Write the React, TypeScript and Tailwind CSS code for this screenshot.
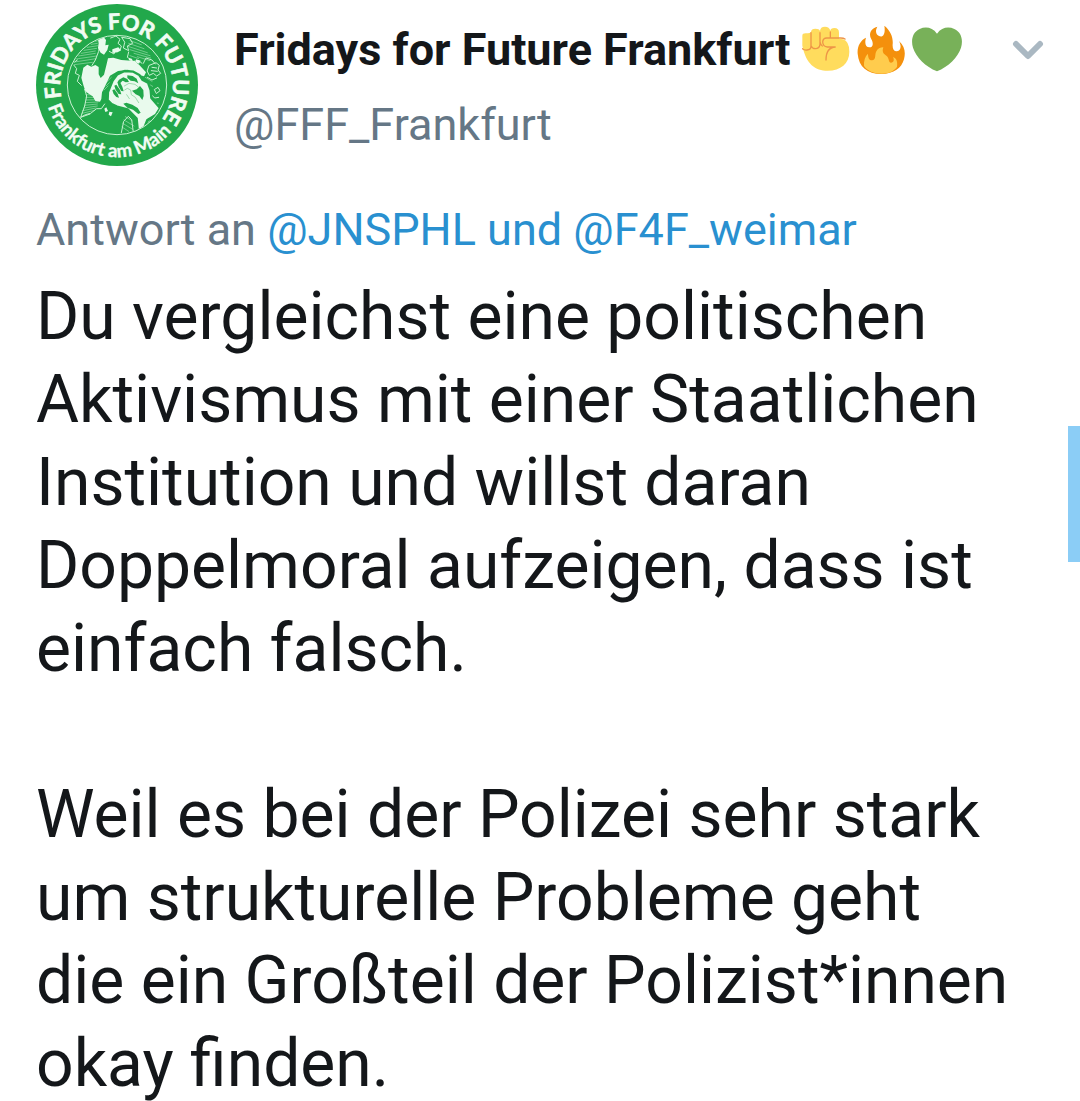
import { ChevronDown } from 'lucide-react';

function Avatar() {
  return (
    <svg
      className="block w-[162px] h-[162px] shrink-0"
      viewBox="18 12 486 486"
      role="img"
      aria-label="Fridays for Future Frankfurt am Main"
    >
      <defs>
        <path id="ring-top" d="M 95 294 A 169 169 0 1 1 385 370" />
        <path id="ring-bottom" d="M 54 320 A 215 215 0 0 0 465 320" />
        <clipPath id="globe">
          <circle cx="261" cy="255" r="147" />
        </clipPath>
      </defs>
      <circle cx="261" cy="255" r="243" fill="#22a84b" />
      <g fill="#f1fcf3" stroke="#f1fcf3" fontFamily="Lato, sans-serif" fontWeight="700">
        <text fontSize="65" strokeWidth="2">
          <textPath href="#ring-top">FRIDAYS FOR FUTURE</textPath>
        </text>
        <text fontSize="56" strokeWidth="1">
          <textPath href="#ring-bottom">Frankfurt am Main</textPath>
        </text>
      </g>

      <g clipPath="url(#globe)" strokeLinecap="round" strokeLinejoin="round">
        {/* hatched oceans */}
        <g stroke="#9bdcad" strokeWidth="2" fill="none">
          <path d="M146 168l50-8M138 177l62-9M134 186l64-10M132 194l55-7M154 160l42-7M162 151l38-6M172 142l32-5M184 133l18-3M196 124l8-2" />
          <path d="M300 122l34 12M296 130l46 16M294 139l58 19M300 149l60 18M312 160l50 14M322 170l38 12M300 167l26 9" />
          <path d="M168 276l34 4M168 284l40 2M168 292l42 0M168 300l40-1M166 308l38-2M164 316l38-4M162 324l40-6M158 332l40-8M156 340l38-9" />
          <path d="M286 350l20 12M282 360l30 18M278 370l30 18M276 381l20 13M344 362l34-20M350 352l30-16M354 368l16-9M340 372l20-10" />
          <path d="M226 224l14-10M228 234l18-14M230 246l14-14M228 258l10-10M222 270l12-12M346 232l20 12M352 250l16 9" />
        </g>
        {/* coast lines */}
        <g stroke="#c8f1d1" strokeWidth="3" fill="none">
          <path d="M164 268l6 20-6 30-12 34 14-8 16-4 18-14 14 0 10-14 M152 352l28-10" />
          <path d="M132 196l8 10-4 14 12 6-6 18 12 12M134 186l8-6 M186 196l10-16 10-26 4-24 14-20" />
          <path d="M242 114l16-6 12 10-6 12 10 8-4 14-14-2-4 12-14-8M276 112l24 4 8 14-16 8 4 14-16-8 4-16z" />
          <path d="M296 156l-4 16 18 12 16-2 10 8M340 190l8-16 18 6 10 12" />
          <path d="M358 196l20-8 10 8-4 14 8 10-12 8-10-8-12 6-6-12zM366 202l14 2M364 212l18 2M352 232l14 8 14-6" />
          <path d="M374 268l10-6 6 10-10 8zM366 286l8 8 12-2M364 302l8 8 12 0" />
        </g>
        {/* land masses */}
        <g fill="#e9faed">
          <path d="M204 118l16-8 8 10-2 16 10-2-4 16-10 14-10-6-8-14 2-14z" />
          <path d="M247 148l18-6 8 9-10 6-16 2zM318 178l14 4-5 9-10-4zM298 174l9 3-2 7-9-4z" />
          <path d="M160 203l12-9 12 6 12-5 10 6 0 22 6 11 10-10 8-32 4-17 16-2 24 7 40 3 14 12 20 22-6 12-28-8-20-12-30 4-24 14-16 34-8 16-2 20-4 8-14-2-8-14-12-8-10-8-6-18-6-22z" />
          <path d="M223 326l6-4 5 11-8 3zM238 335l10 2-5 12-7-5z" />
        </g>
        {/* raised fist and forearm */}
        <path
          d="M234 276l14-34 14-19 22-10 26 2 18 10 10 15 16 8 8 22 2 24 26 30-12 20-26 16-16 40-12-2-4-42-27-28-32-8-16-8-12-12z"
          fill="#e9faed"
          stroke="#22a84b"
          strokeWidth="7"
        />
        <g fill="#22a84b">
          <path d="M266 240l14-8 12 5 5 9-10 1-9-5-7 7-7-3zM292 226l16 2 12 8 5 14-11-6-12-2-10-8z" />
          <path d="M262 246l6-4 9 18 4 14-7-1-8-13zM253 257l6-3 11 16 4 13-8-1-9-12zM247 271l6-3 10 13 4 12-8-2-8-9z" />
          <path d="M306 272l14-4 10-10 10 12 1 18-4 12-9-12-11-5zM280 311l9-3 18 6 16 10 9 14-7 4-16-13-17-6z" />
        </g>
        <path
          d="M283 258l14-8 18 3 10 8M284 270l8-5 10 5 2 14 12 8 10 16M290 284l8 12"
          fill="none"
          stroke="#7acb90"
          strokeWidth="2"
        />
        <path d="M274 398l7-34 14-15 10 10 5 38" fill="none" stroke="#c8f1d1" strokeWidth="3" />
      </g>
      <circle cx="261" cy="255" r="149" fill="none" stroke="#c8f1d1" strokeWidth="3" />
    </svg>
  );
}

function Fist() {
  return (
    <svg className="block w-12 h-12 shrink-0" viewBox="34 34 144 144" role="img" aria-label="Faust">
      <path
        d="M35 103V63q0-7 10-7 15 0 16-5 1-9 13-9 12 0 14 7 1-13 15-13 13 0 16 12 1-8 12-8 14 0 14 14v18l12 2q19 6 19 37c0 35-26 57-65 57-37 0-65-20-76-75z"
        fill="#ffdc5d"
      />
      <path
        d="M35 102q6 5 14 4 12 0 12-12V54M61 93q4 9 13 9 12 0 14-13V54M88 82q2 10 7 12M119 52v17M163 73q-4-3-13-3h-42q-11 0-12 12 1 14 14 15h25q-29 1-29 39"
        fill="none"
        stroke="#ee9547"
        strokeWidth="4"
        strokeLinecap="round"
      />
    </svg>
  );
}

function Fire() {
  return (
    <svg className="block w-12 h-12 shrink-0" viewBox="201 34 144 144" role="img" aria-label="Feuer">
      <path
        d="M283 33c19 16 27 36 25 56-1 14 4 22 13 21 12-2 14-16 6-31 18 16 20 36 15 55-7 26-30 44-68 44-42 0-68-22-71-61-2-21 8-40 25-48-5 16-1 29 10 29 13 0 12-14 6-24-10-17 0-34 18-38-8 15-3 26 7 29 14 3 17-14 14-32z"
        fill="#f4900c"
      />
      <path
        d="M222 154c-1-15 3-29 12-37 0 13 4 20 12 20 13-1 8-16 12-25 4-10 13-14 22-14-6 17 4 21 11 27 7 7 4 19 12 19 9 0 10-10 6-17 12 4 14 17 12 30-10 13-23 20-46 20-24 0-43-8-53-23z"
        fill="#ffcc4d"
      />
    </svg>
  );
}

function Heart() {
  return (
    <svg className="block w-[50px] h-12 shrink-0" viewBox="366 34 150 144" role="img" aria-label="Grünes Herz">
      <path
        d="M441 57c14-19 34-22 52-14 21 9 27 33 20 56-9 29-38 57-72 71-34-14-63-42-72-71-7-23-1-47 20-56 18-8 38-5 52 14z"
        fill="#78b159"
      />
    </svg>
  );
}

export default function App() {
  return (
    <main className="relative min-h-screen overflow-hidden bg-white pt-1 pl-9 font-[Roboto,sans-serif] text-[#14171a]">
      <article>
        <header className="flex gap-9 pr-7">
          <Avatar />
          <div className="min-w-0 flex-1 pt-2 text-[45px] leading-[75px]">
            <div className="flex items-center">
              <h1 className="whitespace-nowrap font-bold">Fridays for Future Frankfurt</h1>
              <div className="ml-3 flex gap-[7px]">
                <Fist />
                <Fire />
                <Heart />
              </div>
              <button type="button" aria-label="Mehr" className="ml-auto text-[#aab8c2]">
                <ChevronDown className="block w-12 h-12" strokeWidth={3} />
              </button>
            </div>
            <p className="text-[#657786]">@FFF_Frankfurt</p>
          </div>
        </header>

        <p className="mt-[34px] text-[45px] leading-[60px] text-[#657786]">
          Antwort an{' '}
          <span className="text-[#2990d0]">
            <a href="#jnsphl">@JNSPHL</a> und <a href="#f4f-weimar">@F4F_weimar</a>
          </span>
        </p>

        <div className="mt-[15px] pr-[66px] text-[66px] leading-[83px]">
          <p className="mb-[83px]">
            Du vergleichst eine politischen Aktivismus mit einer Staatlichen Institution und willst daran
            Doppelmoral aufzeigen, dass ist einfach falsch.
          </p>
          <p>
            Weil es bei der Polizei sehr stark um strukturelle Probleme geht die ein Großteil der
            Polizist*innen okay finden.
          </p>
        </div>
      </article>

      {/* scroll handle */}
      <div className="absolute right-0 top-[426px] h-[136px] w-3 bg-[#8bcdf6]" />
    </main>
  );
}
